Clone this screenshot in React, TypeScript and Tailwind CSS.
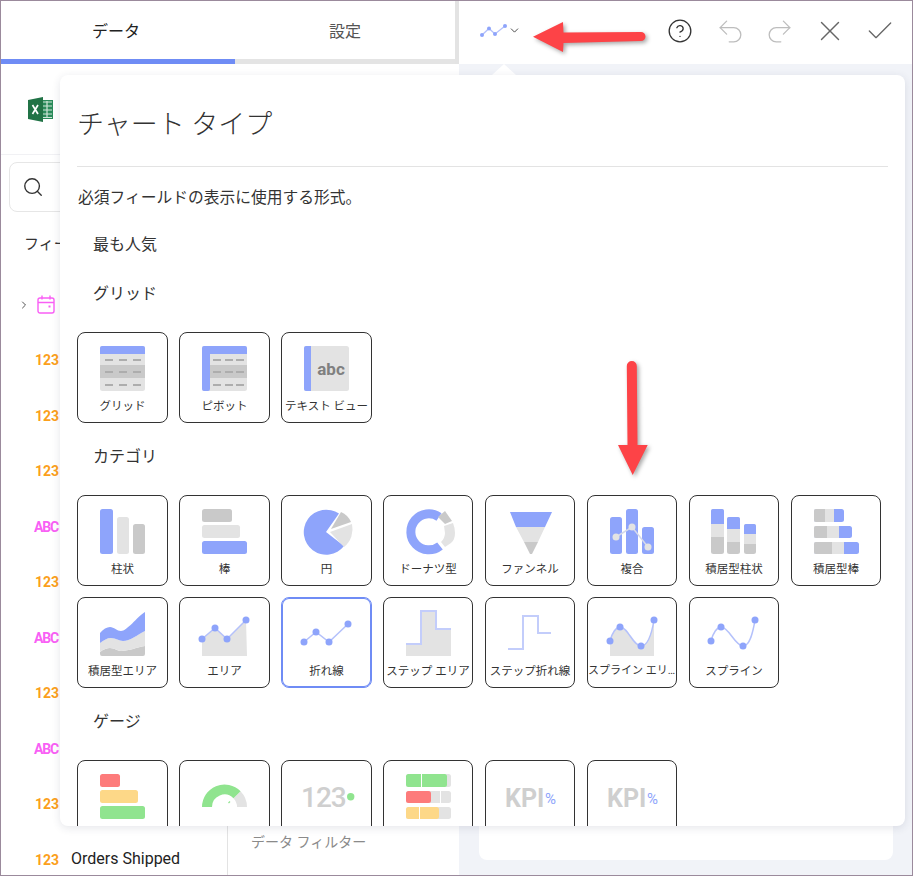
import type { ReactNode } from "react";
import { CircleHelp, Undo2, Redo2, X, Check, Search, ChevronRight, ChevronDown } from "lucide-react";

const BLUE = "#8ea4fb";
const LIGHT = "#e3e3e3";
const MID = "#c9c9c9";
const LINE = "#b4c1fb";
const GREEN = "#90e48f";
const RED = "#fd7b7b";
const YELLOW = "#fdd888";

const Bar = ({ x, y, w, h, c, r = 2.5 }: { x: number; y: number; w: number; h: number; c: string; r?: number }) => (
  <rect x={x} y={y} width={w} height={h} rx={r} fill={c} />
);

const Dots = ({ pts, c = BLUE, r = 3.5 }: { pts: number[][]; c?: string; r?: number }) => (
  <>
    {pts.map(([x, y]) => (
      <circle key={x} cx={x} cy={y} r={r} fill={c} />
    ))}
  </>
);

const dashes = (ys: number[], xs: number[]) =>
  ys.flatMap((y) => xs.map((x) => <rect key={`${x}-${y}`} x={x} y={y} width={8} height={2} fill="#adadad" />));

// ── chart icons, coordinates are relative to the tile's outer corner ─────────
const icons: Record<string, ReactNode> = {
  grid: (
    <>
      <Bar x={23} y={14} w={45} h={45} c={LIGHT} />
      <rect x={23} y={33} width={45} height={13} fill={MID} />
      <path d="M25 14h41a2 2 0 0 1 2 2v6H23v-6a2 2 0 0 1 2-2z" fill={BLUE} />
      {dashes([27, 39, 52], [28, 42, 56])}
    </>
  ),
  pivot: (
    <>
      <Bar x={23} y={14} w={45} h={45} c={LIGHT} />
      <rect x={31} y={33} width={37} height={13} fill={MID} />
      <path d="M25 14h41a2 2 0 0 1 2 2v6H31v35a2 2 0 0 1-2 2h-4a2 2 0 0 1-2-2V16a2 2 0 0 1 2-2z" fill={BLUE} />
      {dashes([27, 39, 52], [34, 46, 57])}
    </>
  ),
  text: (
    <>
      <Bar x={23} y={14} w={45} h={45} c={LIGHT} />
      <path d="M25 14h5v45h-5a2 2 0 0 1-2-2V16a2 2 0 0 1 2-2z" fill={BLUE} />
      <text x={50} y={43} textAnchor="middle" fontFamily="Roboto" fontWeight={700} fontSize={17} fill="#808080">abc</text>
    </>
  ),
  column: (
    <>
      <Bar x={23} y={14} w={13} h={45} c={BLUE} />
      <Bar x={40} y={22} w={12} h={37} c={LIGHT} />
      <Bar x={56} y={29} w={12} h={30} c={MID} />
    </>
  ),
  bar: (
    <>
      <Bar x={23} y={14} w={30} h={13} c={MID} />
      <Bar x={23} y={30} w={38} h={13} c={LIGHT} />
      <Bar x={23} y={46} w={45} h={13} c={BLUE} />
    </>
  ),
  pie: (
    <>
      <path d="M45 37L58 18.6A22.5 22.5 0 1 0 63 51Z" fill={BLUE} />
      <path d="M50 34L60 17Q67 20 70 27Z" fill={MID} />
      <path d="M49 37L71 29A23 23 0 0 1 63 52Z" fill={LIGHT} />
    </>
  ),
  donut: (
    <>
      <path d="M56 22A18 18 0 1 0 57 51" fill="none" stroke={BLUE} strokeWidth={9} />
      <path d="M62 16L69 26L62 29L55 22Z" fill={MID} />
      <path d="M61 31L70 28Q72 33 72 38Q72 45 68 48L62 52L58 47Q62 43 62 38Z" fill={LIGHT} />
    </>
  ),
  funnel: (
    <>
      <path d="M25 17H67L60 32H31Z" fill={BLUE} />
      <path d="M31 32H60L53 47H39Z" fill={LIGHT} />
      <path d="M39 47H53L47 59H45Z" fill={MID} />
    </>
  ),
  combo: (
    <>
      <Bar x={23} y={22} w={12} h={37} c={BLUE} />
      <Bar x={39} y={14} w={12} h={45} c={BLUE} />
      <Bar x={55} y={32} w={12} h={27} c={BLUE} />
      <polyline points="29,42 45,32 61,52" fill="none" stroke="#d5d9ea" strokeWidth={1.5} />
      <Dots pts={[[29, 42], [45, 32], [61, 52]]} c="#e3e3e3" />
    </>
  ),
  stackedColumn: (
    <>
      <Bar x={22} y={14} w={13} h={45} c={MID} />
      <rect x={22} y={29} width={13} height={13} fill={LIGHT} />
      <path d="M24 14h9a2 2 0 0 1 2 2v13H22V16a2 2 0 0 1 2-2z" fill={BLUE} />
      <Bar x={38} y={22} w={13} h={37} c={MID} />
      <rect x={38} y={34} width={13} height={13} fill={LIGHT} />
      <path d="M40 22h9a2 2 0 0 1 2 2v10H38V24a2 2 0 0 1 2-2z" fill={BLUE} />
      <Bar x={55} y={29} w={12} h={30} c={MID} />
      <rect x={55} y={39} width={12} height={10} fill={LIGHT} />
      <path d="M57 29h8a2 2 0 0 1 2 2v8H55v-8a2 2 0 0 1 2-2z" fill={BLUE} />
    </>
  ),
  stackedBar: (
    <>
      <Bar x={23} y={14} w={30} h={13} c={BLUE} />
      <path d="M25 14h18v13H25a2 2 0 0 1-2-2v-9a2 2 0 0 1 2-2z" fill={LIGHT} />
      <path d="M25 14h9v13h-9a2 2 0 0 1-2-2v-9a2 2 0 0 1 2-2z" fill={MID} />
      <Bar x={23} y={31} w={38} h={12} c={BLUE} />
      <path d="M25 31h23v12H25a2 2 0 0 1-2-2v-8a2 2 0 0 1 2-2z" fill={LIGHT} />
      <path d="M25 31h11v12H25a2 2 0 0 1-2-2v-8a2 2 0 0 1 2-2z" fill={MID} />
      <Bar x={23} y={47} w={45} h={12} c={BLUE} />
      <path d="M25 47h28v12H25a2 2 0 0 1-2-2v-8a2 2 0 0 1 2-2z" fill={LIGHT} />
      <path d="M25 47h16v12H25a2 2 0 0 1-2-2v-8a2 2 0 0 1 2-2z" fill={MID} />
    </>
  ),
  stackedArea: (
    <>
      <path d="M23 55C27 52 30 51 33 51C38 51 40 54 44 54C52 54 60 50 68 49V57a2 2 0 0 1-2 2H25a2 2 0 0 1-2-2Z" fill={MID} />
      <path d="M23 46C27 43 30 41 34 41C39 41 42 44 46 44C53 44 60 38 68 34V49C60 50 52 54 44 54C40 54 38 51 33 51C30 51 27 52 23 55Z" fill={LIGHT} />
      <path d="M23 36C26 32 30 30 33 30C37 30 40 34 44 34C50 34 60 20 68 15V34C60 38 53 44 46 44C42 44 39 41 34 41C30 41 27 43 23 46Z" fill={BLUE} />
    </>
  ),
  area: (
    <>
      <path d="M23 42L36 31L48 42L67 23L68 59H23Z" fill={LIGHT} />
      <polyline points="23,42 36,31 48,42 67,23" fill="none" stroke={LINE} strokeWidth={1.5} />
      <Dots pts={[[23, 42], [36, 31], [48, 42], [67, 23]]} />
    </>
  ),
  line: (
    <>
      <polyline points="23,45 35,35 48,45 67,27" fill="none" stroke={LINE} strokeWidth={1.5} />
      <Dots pts={[[23, 45], [35, 35], [48, 45], [67, 27]]} />
    </>
  ),
  stepArea: (
    <>
      <path d="M23 47H38V14H53V32H68V59H23Z" fill={LIGHT} />
      <path d="M23 47H38V14H53V32H68" fill="none" stroke="#c3cdfb" strokeWidth={2} />
    </>
  ),
  stepLine: <path d="M23 52H38V19H53V36H66" fill="none" stroke="#c3cdfb" strokeWidth={2} />,
  splineArea: (
    <>
      <path d="M23 44C25 36 29 30 33 30C41 30 46 49 54 49C61 49 65 35 67 23V59H23Z" fill={LIGHT} />
      <path d="M23 44C25 36 29 30 33 30C41 30 46 49 54 49C61 49 65 35 67 23" fill="none" stroke={LINE} strokeWidth={1.5} />
      <Dots pts={[[23, 44], [33, 30], [54, 49], [67, 23]]} />
    </>
  ),
  spline: (
    <>
      <path d="M22 44C24 36 28 30 32 30C40 30 46 49 54 49C61 49 64 35 66 23" fill="none" stroke={LINE} strokeWidth={1.5} />
      <Dots pts={[[22, 44], [32, 30], [54, 49], [66, 23]]} />
    </>
  ),
  gaugeBars: (
    <>
      <Bar x={23} y={14} w={20} h={13} c={RED} />
      <Bar x={23} y={30} w={38} h={13} c={YELLOW} />
      <Bar x={23} y={46} w={45} h={13} c={GREEN} />
    </>
  ),
  gauge: (
    <>
      <path d="M58 34.7A17.5 17.5 0 0 1 63 47" fill="none" stroke={LIGHT} strokeWidth={10} />
      <path d="M28 47A17.5 17.5 0 0 1 58 34.7" fill="none" stroke={GREEN} strokeWidth={10} />
      <path d="M49.5 43L51 41.5" stroke={GREEN} strokeWidth={1.2} />
    </>
  ),
  textGauge: (
    <>
      <text x={20} y={47} fontFamily="Roboto" fontWeight={500} fontSize={28} letterSpacing={-1} fill="#cfcfcf">123</text>
      <circle cx={69.7} cy={36.7} r={3.7} fill={GREEN} />
    </>
  ),
  bullet: (
    <>
      <Bar x={23} y={14} w={45} h={13} c={LIGHT} />
      <Bar x={23} y={14} w={41} h={13} c={GREEN} />
      <rect x={38} y={14} width={1} height={13} fill="#fff" />
      <Bar x={23} y={31} w={45} h={12} c={LIGHT} />
      <Bar x={23} y={31} w={25} h={12} c={RED} />
      <rect x={57} y={31} width={1} height={12} fill="#fff" />
      <Bar x={23} y={47} w={45} h={12} c={LIGHT} />
      <Bar x={23} y={47} w={33} h={12} c={YELLOW} />
      <rect x={36} y={47} width={1} height={12} fill="#fff" />
    </>
  ),
  kpi: (
    <>
      <text x={20} y={47} fontFamily="Roboto" fontWeight={700} fontSize={25} fill="#cfcfcf">KPI</text>
      <text x={60} y={44} fontFamily="Roboto" fontSize={15} fill={BLUE}>%</text>
    </>
  ),
};

type TileData = { icon: string; label?: string; selected?: boolean; tight?: boolean };

function Tile({ icon, label, selected, tight, narrow }: TileData & { narrow?: boolean }) {
  return (
    <div
      className={`flex h-[91px] flex-col items-center rounded-lg border ${narrow ? "w-[90px]" : "w-[91px]"} ${
        selected ? "border-[#6f8cf5] ring-1 ring-inset ring-[#6f8cf5]" : "border-[#333]"
      }`}
    >
      <svg width={89} height={59} viewBox="1 1 89 59" className="block flex-shrink-0 overflow-visible">
        {icons[icon]}
      </svg>
      <div className={`mt-1 h-5 w-full truncate text-center leading-5 text-[#333] ${tight ? "text-[11px]" : "text-[11.5px]"}`}>{label}</div>
    </div>
  );
}

function Heading({ title }: { title: string }) {
  return <div className="ml-4 mt-[21px] mb-[27px] box-border h-6 pt-px text-base leading-6 text-[#333]">{title}</div>;
}

function TileGrid({ tiles }: { tiles: TileData[] }) {
  return (
    <div className="grid grid-cols-[repeat(8,102px)] gap-y-[11px]">
      {tiles.map((t, i) => (
        <Tile key={`${t.icon}-${i}`} {...t} narrow={i % 8 >= 3} />
      ))}
    </div>
  );
}

const fields: { kind: "date" | "num" | "text"; label?: string }[] = [
  { kind: "date" },
  { kind: "num" },
  { kind: "num" },
  { kind: "num" },
  { kind: "text" },
  { kind: "num" },
  { kind: "text" },
  { kind: "num" },
  { kind: "text" },
  { kind: "num" },
  { kind: "num", label: "Orders Shipped" },
];

function FieldRow({ kind, label }: { kind: string; label?: string }) {
  return (
    <div className="relative flex h-[55.5px] items-center">
      {kind === "date" && (
        <>
          <ChevronRight className="absolute left-[17px] h-3 w-3 text-[#555]" />
          <svg width={18} height={19} viewBox="0 0 18 19" className="absolute left-[36px]" fill="none" stroke="#f95ff5" strokeWidth={1.4}>
            <rect x={1} y={3} width={16} height={15} rx={2} />
            <path d="M1 7.5H17M5 0.5V4.5M13 0.5V4.5" />
            <rect x={11.5} y={10.5} width={2} height={2} fill="#f95ff5" stroke="none" />
          </svg>
        </>
      )}
      {kind === "num" && <span className="absolute left-[34px] text-sm font-bold text-[#fb9f1c]">123</span>}
      {kind === "text" && <span className="absolute left-[33px] text-sm font-bold tracking-[-1.2px] text-[#f95ff5]">ABC</span>}
      {label && <span className="absolute left-[70px] -translate-y-px text-base text-[#222]">{label}</span>}
    </div>
  );
}

export default function App() {
  return (
    <div className="relative box-border flex h-[876px] w-[913px] overflow-hidden border border-[#9b8a9c] bg-white font-['Roboto','Noto_Sans_CJK_JP',sans-serif] text-[#333]">
      {/* left: data panel */}
      <div className="flex w-[454px] flex-shrink-0 flex-col">
        <div className="flex h-[58px] pt-1 text-base">
          <div className="flex w-[234px] items-center justify-center pr-1 text-[#222]">データ</div>
          <div className="flex w-[220px] items-center justify-center text-[#555]">設定</div>
        </div>
        <div className="flex h-[5px] w-[454px] bg-[#e4e4e4]">
          <div className="w-[234px] bg-[#6f8cf5]" />
        </div>
        <div className="flex h-[91px] items-center border-b border-[#f1f1f4] pl-[27px]">
          <svg width={26} height={25} viewBox="0 0 26 25">
            <rect x={13} y={3} width={12} height={19} fill="#2a8a5a" />
            <path d="M14.5 5H24M14.5 9H24M14.5 13H24M14.5 17H24M14.5 20.5H24M19 4V21" stroke="#cfe5d8" strokeWidth={1.2} />
            <path d="M0 3L15 0V25L0 22Z" fill="#217346" />
            <path d="M4.5 8L10 17M10 8L4.5 17" stroke="#fff" strokeWidth={1.7} />
          </svg>
        </div>
        <div className="flex min-h-0 flex-1">
          <div className="w-[227px] flex-shrink-0 border-r border-[#e3e3e3]">
            <div className="ml-2 mt-[7px] flex h-[50px] w-[210px] items-center rounded-lg border border-[#e6e6e6] pl-3">
              <Search className="h-[22px] w-[22px] text-[#333]" strokeWidth={1.5} />
            </div>
            <div className="ml-[23px] mt-5 h-6 text-[15px] leading-6 text-[#333]">フィールド</div>
            <div className="mt-[21px]">
              {fields.map((f, i) => (
                <FieldRow key={i} {...f} />
              ))}
            </div>
          </div>
          <div className="flex flex-1 flex-col justify-end pb-[21px] pl-[23px] text-sm leading-6 text-[#8a8a8a]">データ フィルター</div>
        </div>
      </div>
      <div className="h-[63px] w-1 flex-shrink-0 bg-[#e3e3e3]" />

      {/* right: preview */}
      <div className="absolute bottom-0 left-[458px] right-0 top-[63px] bg-[#f1f3f8] pb-[15px] pl-5 pr-[19px] pt-3">
        <div className="h-full rounded-lg bg-white" />
      </div>
      <div className="flex h-[63px] flex-1 items-center pb-[3px] pl-[21px]">
        <svg width={27} height={14} viewBox="0 0 27 14" fill="none">
          <polyline points="2,11 9,4.5 15,10 25,2" stroke={LINE} strokeWidth={1.3} />
          <Dots pts={[[2, 11], [9, 4.5], [15, 10], [25, 2]]} r={2} />
        </svg>
        <ChevronDown className="ml-px h-[13px] w-[13px] -translate-y-px text-[#333]" strokeWidth={1.6} />
        <CircleHelp className="ml-[146px] h-[26px] w-[26px] flex-shrink-0 text-[#333]" strokeWidth={1.2} />
        <Undo2 className="ml-[22px] h-[31px] w-[31px] flex-shrink-0 text-[#bdbdbd]" strokeWidth={1} />
        <Redo2 className="ml-[18px] h-[31px] w-[31px] flex-shrink-0 text-[#bdbdbd]" strokeWidth={1} />
        <X className="ml-[18px] h-[34px] w-[34px] flex-shrink-0 text-[#666]" strokeWidth={1} />
        <Check className="ml-[17px] h-[32px] w-[32px] flex-shrink-0 text-[#666]" strokeWidth={1} />
      </div>

      {/* chart type popup */}
      <div className="absolute left-[491px] top-[63px] h-0 w-0 border-x-[12px] border-b-[11px] border-x-transparent border-b-white" />
      <div className="absolute left-[59px] top-[74px] h-[751px] w-[845px] overflow-hidden rounded-lg bg-white px-[17px] shadow-[0_2px_8px_rgba(40,50,80,0.12)]">
        <div className="h-[92px] border-b border-[#e3e3e3] pt-[32px] text-[27px] font-light leading-9 text-[#333]">チャート タイプ</div>
        <div className="mt-[19px] h-6 pl-px text-[15.75px] leading-6 text-[#333]">必須フィールドの表示に使用する形式。</div>
        <div className="ml-4 mt-[22px] box-border h-6 pt-px text-base leading-6 text-[#333]">最も人気</div>
        <div className="h-[4px]" />
        <Heading title="グリッド" />
        <TileGrid
          tiles={[
            { icon: "grid", label: "グリッド" },
            { icon: "pivot", label: "ピボット" },
            { icon: "text", label: "テキスト ビュー" },
          ]}
        />
        <Heading title="カテゴリ" />
        <TileGrid
          tiles={[
            { icon: "column", label: "柱状" },
            { icon: "bar", label: "棒" },
            { icon: "pie", label: "円" },
            { icon: "donut", label: "ドーナツ型" },
            { icon: "funnel", label: "ファンネル" },
            { icon: "combo", label: "複合" },
            { icon: "stackedColumn", label: "積居型柱状" },
            { icon: "stackedBar", label: "積居型棒" },
            { icon: "stackedArea", label: "積居型エリア" },
            { icon: "area", label: "エリア" },
            { icon: "line", label: "折れ線", selected: true },
            { icon: "stepArea", label: "ステップ エリア" },
            { icon: "stepLine", label: "ステップ折れ線" },
            { icon: "splineArea", label: "スプライン エリア", tight: true },
            { icon: "spline", label: "スプライン" },
          ]}
        />
        <Heading title="ゲージ" />
        <TileGrid
          tiles={[
            { icon: "gaugeBars" },
            { icon: "gauge" },
            { icon: "textGauge" },
            { icon: "bullet" },
            { icon: "kpi" },
            { icon: "kpi" },
          ]}
        />
      </div>

      {/* red annotation arrows */}
      <svg width={125} height={44} viewBox="0 0 125 44" className="absolute left-[527px] top-[13px]">
        <path d="M5 22.7L35 8L35.5 18.5L113 18a4.5 4.5 0 0 1 0 9L35.5 29L35 38Z" fill="#fd4347" className="drop-shadow-[2px_2px_2px_rgba(0,0,0,0.35)]" />
      </svg>
      <svg width={44} height={125} viewBox="0 0 44 125" className="absolute left-[609px] top-[355px]">
        <path d="M22.7 119L8 89H17.5L16.8 10a5 5 0 0 1 10 0L27.5 89H37.7Z" fill="#fd4347" className="drop-shadow-[2px_2px_2px_rgba(0,0,0,0.35)]" />
      </svg>
    </div>
  );
}
